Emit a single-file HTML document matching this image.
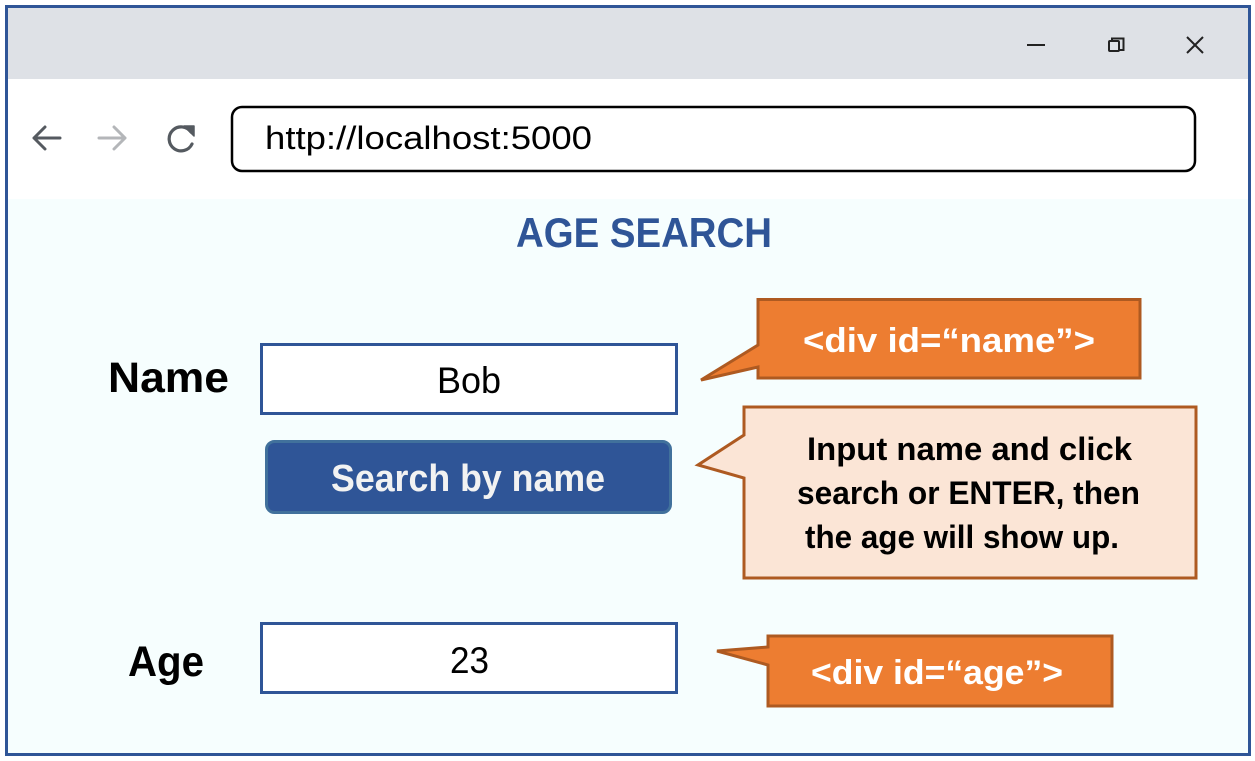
<!DOCTYPE html>
<html><head><meta charset="utf-8"><style>
html,body{margin:0;padding:0;background:#fff;}
svg{display:block;}
text{font-family:"Liberation Sans",sans-serif;}
</style></head><body>
<svg width="1255" height="761" viewBox="0 0 1255 761" xmlns="http://www.w3.org/2000/svg">
<rect x="0" y="0" width="1255" height="761" fill="#ffffff"/>
<rect x="6" y="6" width="1243" height="73" fill="#dee1e6"/>
<rect x="6" y="79" width="1243" height="120" fill="#ffffff"/>
<rect x="6" y="199" width="1243" height="555" fill="#f6fefe"/>
<rect x="6.5" y="6.5" width="1243" height="748" fill="none" stroke="#2f5597" stroke-width="3"/>
<line x1="1027" y1="45" x2="1045" y2="45" stroke="#222" stroke-width="2"/>
<rect x="1109" y="41" width="10" height="10" rx="1" fill="none" stroke="#222" stroke-width="2"/>
<path d="M1112 41 V38.5 H1123.5 V50 H1119" fill="none" stroke="#222" stroke-width="2"/>
<path d="M1187 37 L1203 53 M1203 37 L1187 53" stroke="#222" stroke-width="2"/>
<path d="M60 138 H34 M45 127 L34 138 L45 149" fill="none" stroke="#555a60" stroke-width="3" stroke-linecap="round" stroke-linejoin="round"/>
<path d="M99 138 H125 M114 127 L125 138 L114 149" fill="none" stroke="#b4b6b9" stroke-width="3" stroke-linecap="round" stroke-linejoin="round"/>
<path d="M191 132 A12 12 0 1 0 192 144" fill="none" stroke="#555a60" stroke-width="3.2" stroke-linecap="round"/>
<path d="M184 126 L194 126 L194 136 Z" fill="#555a60" stroke="#555a60" stroke-width="1.5" stroke-linejoin="round"/>
<rect x="232" y="107" width="963" height="64" rx="10" fill="#fff" stroke="#000" stroke-width="2.5"/>
<text x="265" y="149" font-size="32" textLength="327" lengthAdjust="spacingAndGlyphs" fill="#000">http://localhost:5000</text>
<text x="516" y="247" font-size="42" font-weight="bold" textLength="256" lengthAdjust="spacingAndGlyphs" fill="#2f5597">AGE SEARCH</text>
<text x="108" y="392" font-size="43" font-weight="bold" textLength="121" lengthAdjust="spacingAndGlyphs" fill="#000">Name</text>
<rect x="261.5" y="344.5" width="415" height="69" fill="#fff" stroke="#2f5597" stroke-width="3"/>
<text x="437" y="393" font-size="37" textLength="64" lengthAdjust="spacingAndGlyphs" fill="#000">Bob</text>
<rect x="266.5" y="441.5" width="404" height="71" rx="8" fill="#2f5597" stroke="#41719c" stroke-width="3"/>
<text x="331" y="491" font-size="38" font-weight="bold" textLength="274" lengthAdjust="spacingAndGlyphs" fill="#f2f2f2">Search by name</text>
<text x="128" y="676" font-size="43" font-weight="bold" textLength="76" lengthAdjust="spacingAndGlyphs" fill="#000">Age</text>
<rect x="261.5" y="623.5" width="415" height="69" fill="#fff" stroke="#2f5597" stroke-width="3"/>
<text x="450" y="673" font-size="37" textLength="39" lengthAdjust="spacingAndGlyphs" fill="#000">23</text>
<path d="M758 299.5 H1140 V378 H758 V367 L701 380 L758 345 Z" fill="#ed7d31" stroke="#ae5a21" stroke-width="3"/>
<text x="803" y="352" font-size="34" font-weight="bold" textLength="292" lengthAdjust="spacingAndGlyphs" fill="#fff">&lt;div id=“name”&gt;</text>
<path d="M744 407 H1196 V578 H744 V478 L698 465 L744 435 Z" fill="#fbe5d6" stroke="#ae5a21" stroke-width="3"/>
<text x="807" y="460" font-size="32" font-weight="bold" textLength="325" lengthAdjust="spacingAndGlyphs" fill="#000">Input name and click</text>
<text x="797" y="504" font-size="32" font-weight="bold" textLength="343" lengthAdjust="spacingAndGlyphs" fill="#000">search or ENTER, then</text>
<text x="805" y="548" font-size="32" font-weight="bold" textLength="314" lengthAdjust="spacingAndGlyphs" fill="#000">the age will show up.</text>
<path d="M768 636 H1112 V706 H768 V665 L717 651 L768 647 Z" fill="#ed7d31" stroke="#ae5a21" stroke-width="3"/>
<text x="811" y="684" font-size="34" font-weight="bold" textLength="252" lengthAdjust="spacingAndGlyphs" fill="#fff">&lt;div id=“age”&gt;</text>
</svg>
</body></html>
